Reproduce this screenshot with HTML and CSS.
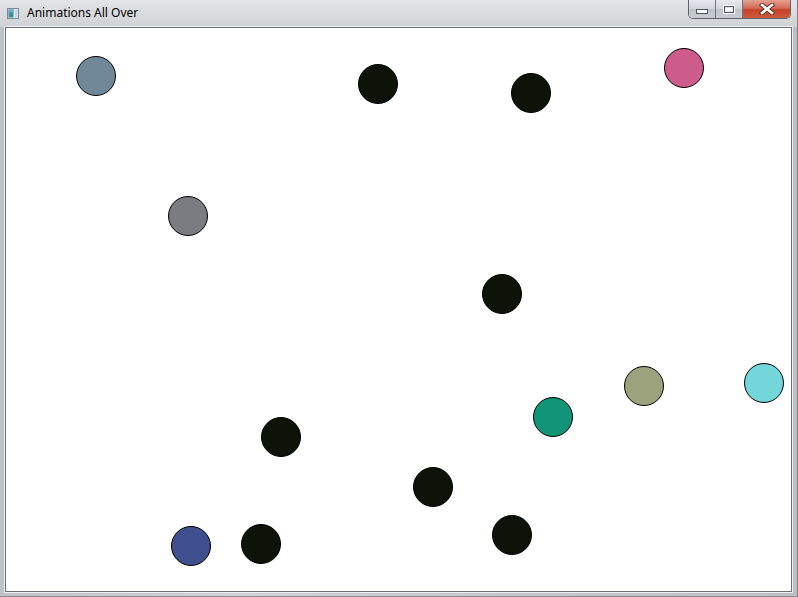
FILE: index.html
```html
<!DOCTYPE html>
<html>
<head>
<meta charset="utf-8">
<title>Animations All Over</title>
<link rel="stylesheet" href="styles.css">
</head>
<body>
<div class="window">
  <div class="titlebar">
    <div class="app-title">
      <svg class="app-icon" width="12" height="11" viewBox="0 0 12 11">
        <rect x="0.5" y="0.5" width="11" height="10" fill="#e8eef4" stroke="#7a8a98"/>
        <rect x="1.5" y="1.5" width="5" height="8" fill="#3d8f9a"/>
        <rect x="1.5" y="1.5" width="5" height="3" fill="#6fb0c4"/>
        <rect x="8" y="1.5" width="2.5" height="8" fill="#c8d4de"/>
      </svg>
      <span class="title-text">Animations All Over</span>
    </div>
    <div class="controls">
      <div class="btn btn-min"><span class="glyph-min"></span></div>
      <div class="btn btn-max"><span class="glyph-max"></span></div>
      <div class="btn btn-close">
        <svg width="16" height="12" viewBox="0 0 16 12">
          <path d="M3 2 L13 10 M13 2 L3 10" stroke="#5a3028" stroke-width="4.4" stroke-linecap="square"/>
          <path d="M3 2 L13 10 M13 2 L3 10" stroke="#ffffff" stroke-width="2.6" stroke-linecap="square"/>
        </svg>
      </div>
    </div>
  </div>
  <div class="client">
    <svg class="canvas" width="786" height="563" viewBox="0 0 786 563">
      <g stroke="#000" stroke-width="1">
        <circle cx="90" cy="48" r="19.5" fill="#708898"/>
        <circle cx="372" cy="56" r="19.5" fill="#0d1309"/>
        <circle cx="525" cy="65" r="19.5" fill="#0d1309"/>
        <circle cx="678" cy="40" r="19.5" fill="#cd5c8b"/>
        <circle cx="182" cy="188" r="19.5" fill="#7b7b82"/>
        <circle cx="496" cy="266" r="19.5" fill="#0d1309"/>
        <circle cx="638" cy="358" r="19.5" fill="#9ca37c"/>
        <circle cx="758" cy="355" r="19.5" fill="#72d6db"/>
        <circle cx="547" cy="389" r="19.5" fill="#129477"/>
        <circle cx="275" cy="409" r="19.5" fill="#0d1309"/>
        <circle cx="427" cy="459" r="19.5" fill="#0d1309"/>
        <circle cx="506" cy="507" r="19.5" fill="#0d1309"/>
        <circle cx="185" cy="518" r="19.5" fill="#3d4f8c"/>
        <circle cx="255" cy="516" r="19.5" fill="#0d1309"/>
      </g>
    </svg>
  </div>
</div>
</body>
</html>
```

FILE: styles.css
```css
html, body {
  margin: 0;
  padding: 0;
  width: 798px;
  height: 597px;
  overflow: hidden;
}

.window {
  width: 798px;
  height: 597px;
  box-sizing: border-box;
  display: flex;
  flex-direction: column;
  background: linear-gradient(90deg, #bfc3c8 0%, #cfd2d6 30%, #c4c7cb 60%, #bcc0c5 100%);
  border-right: 1px solid #7d8186;
  border-bottom: 1px solid #8a8e93;
}

.titlebar {
  height: 27px;
  display: flex;
  justify-content: space-between;
  align-items: flex-start;
  background: linear-gradient(180deg, #e2e4e7 0%, #d7d9dc 60%, #cfd2d5 100%);
}

.app-title {
  display: flex;
  align-items: center;
  gap: 8px;
  padding: 7px 0 0 7px;
}

.app-icon {
  display: block;
}

.title-text {
  font-family: "Noto Sans", "Open Sans", sans-serif;
  font-size: 12px;
  color: #000;
  line-height: 12px;
}

.controls {
  display: flex;
  margin-right: 6px;
  height: 18px;
  border: 1px solid #5d6470;
  border-top: none;
  border-radius: 0 0 5px 5px;
  overflow: hidden;
}

.btn {
  height: 18px;
  display: flex;
  align-items: center;
  justify-content: center;
}

.btn-min,
.btn-max {
  width: 26px;
  background: linear-gradient(180deg, #e6e9ed 0%, #d2d6dc 50%, #bfc4cb 51%, #c8ccd2 100%);
  border-right: 1px solid #6e7580;
}

.glyph-min {
  width: 10px;
  height: 3px;
  background: #fff;
  border: 1px solid #4f5560;
  margin-top: 5px;
}

.glyph-max {
  width: 8px;
  height: 5px;
  border: 1px solid #4f5560;
  background: #fff;
  box-shadow: inset 0 0 0 1px #e0e3e7;
  outline: 1px solid #fff;
}

.btn-close {
  width: 47px;
  background: linear-gradient(180deg, #e4a091 0%, #d56a55 45%, #c44329 55%, #cf5a3c 100%);
}

.client {
  margin: 0 5px 4px 5px;
  flex: 1;
  border: 1px solid #6b6f75;
  background: #fff;
  box-shadow: 0 0 0 1px #eeeff1;
}

.canvas {
  display: block;
}
```
